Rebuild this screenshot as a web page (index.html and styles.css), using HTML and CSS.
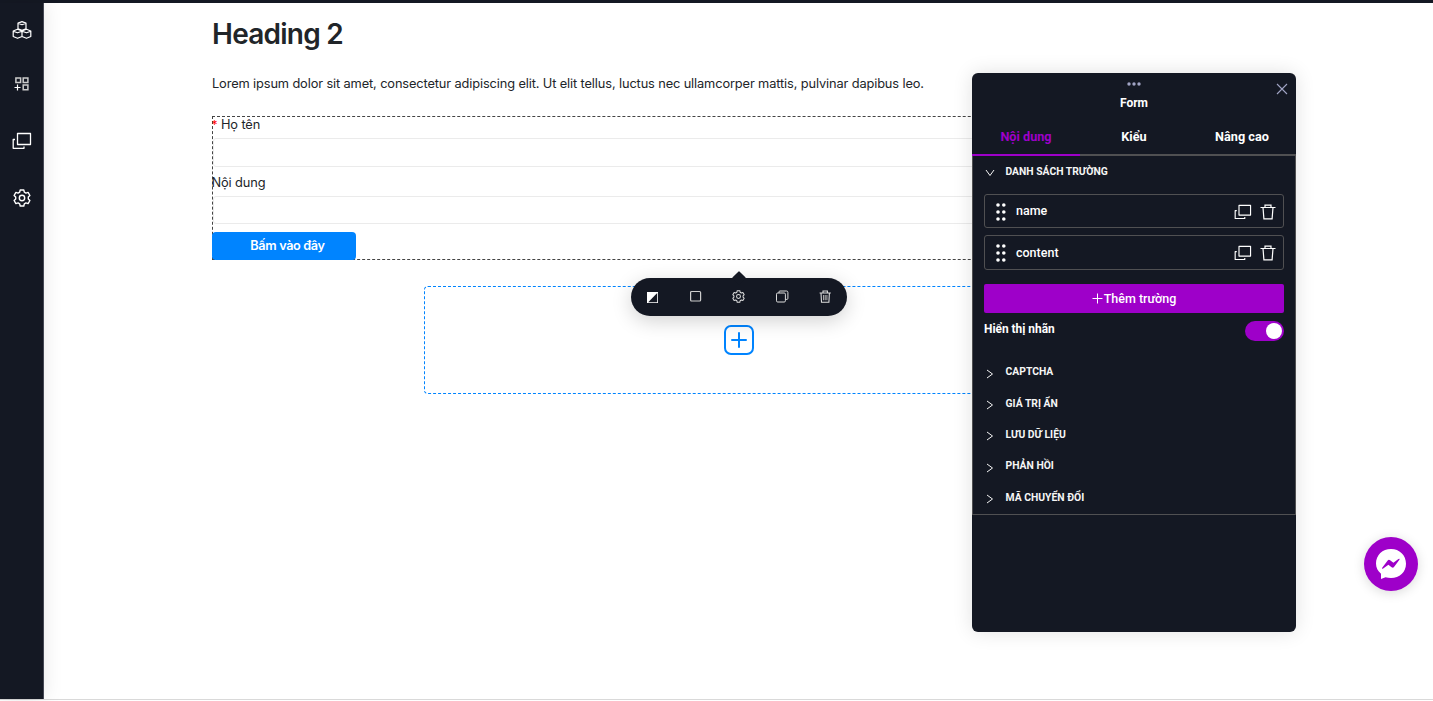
FILE: index.html
```html
<!DOCTYPE html>
<html lang="vi">
<head>
<meta charset="utf-8">
<title>Form editor</title>
<link rel="stylesheet" href="styles.css">
</head>
<body>
<svg class="defs" width="0" height="0">
  <symbol id="windows" viewBox="0 0 20 18"><path d="M5.500 1.500h13v11h-13zM3 7.500H1.200v8.800h10.800v-1.800" fill="none" stroke="currentColor" stroke-width="1.300" stroke-linejoin="round"/></symbol>
  <symbol id="gear" viewBox="0 0 18 18"><path d="M7.200 1h3.600l.5 2.200 1.600.9 2.200-.7 1.800 3.100-1.600 1.600v1.800l1.600 1.600-1.800 3.100-2.200-.7-1.600.9-.5 2.200H7.200l-.5-2.200-1.600-.9-2.200.7-1.800-3.100 1.600-1.600V8.100L1.100 6.500l1.800-3.100 2.200.7 1.600-.9z" fill="none" stroke="currentColor" stroke-width="1.400" stroke-linejoin="round"/><circle cx="9" cy="9" r="2.700" fill="none" stroke="currentColor" stroke-width="1.400"/></symbol>
  <symbol id="bin" viewBox="0 0 16 16"><path d="M.5 3.500h15M5 3.300V1.200h6v2.100M3 3.500l.9 11.300h8.200L13 3.500" fill="none" stroke="currentColor" stroke-width="1.200"/></symbol>
  <symbol id="grip" viewBox="0 0 10 18"><g fill="currentColor"><circle cx="2" cy="2" r="1.800"/><circle cx="7.800" cy="2" r="1.800"/><circle cx="2" cy="9" r="1.800"/><circle cx="7.800" cy="9" r="1.800"/><circle cx="2" cy="16" r="1.800"/><circle cx="7.800" cy="16" r="1.800"/></g></symbol>
  <symbol id="chevron" viewBox="0 0 8 10"><path d="M1 1l5.500 4L1 9" fill="none" stroke="currentColor"/></symbol>
</svg>
<div class="app">
  <div class="topbar"></div>
  <div class="workspace">
    <nav class="rail">
      <svg class="rail-icon" width="20" height="20" viewBox="0 0 20 20" fill="none" stroke="currentColor" stroke-width="1.200" stroke-linejoin="round"><path d="M10 1.600l4 1.500v5.800l-4 1.300-4-1.300V3.100zM6 3.300l4 1.400 4-1.400M5.500 9.300L10 11v5.500l-4.500 1.800-4.300-1.800V11zM1.200 11.200l4.300 1.600 4.500-1.600M14.500 9.300l4.300 1.700v5.500l-4.300 1.800-4.500-1.800V11zM10 11.200l4.500 1.600 4.300-1.600"/></svg>
      <svg class="rail-icon" width="16" height="16" viewBox="0 0 16 16" fill="none" stroke="#ccc" stroke-width="1.500"><path d="M1.900 1.900h4.700v4.700H1.900zM9.200 1.900h4.700v4.700H9.200zM9.200 9.100h4.700v4.700H9.200z"/><path d="M3.500 8.500v6M.5 11.500h6" stroke="#fff" stroke-width="1.200"/></svg>
      <svg class="rail-icon" width="20" height="18"><use href="#windows"/></svg>
      <svg class="rail-icon" width="18" height="18"><use href="#gear"/></svg>
    </nav>
    <main class="canvas">
      <section class="page">
        <h2 class="heading">Heading 2</h2>
        <p class="lorem">Lorem ipsum dolor sit amet, consectetur adipiscing elit. Ut elit tellus, luctus nec ullamcorper mattis, pulvinar dapibus leo.</p>
        <form class="form">
          <label class="label"><span class="required">*</span> Họ tên</label>
          <div class="input"></div>
          <label class="label label-second">Nội dung</label>
          <div class="input input-second"></div>
          <button class="submit" type="button">Bấm vào đây</button>
        </form>
        <div class="dropzone">
          <svg width="30" height="30" viewBox="0 0 30 30" fill="none" stroke="#0084ff" stroke-width="2"><rect x="1" y="1" width="28" height="28" rx="6"/><path d="M15 8v14M8 15h14" stroke-linecap="round"/></svg>
          <div class="toolbar">
            <svg width="13" height="13" viewBox="0 0 13 13"><rect x="1" y="2" width="11" height="11" fill="#fff"/><path d="M11.200 3v9.200H2.200z" fill="#141823"/></svg>
            <svg width="13" height="13" viewBox="0 0 13 13" fill="none" stroke="#ccc" stroke-width="1.200"><rect x="1.600" y="1.500" width="10" height="9.500" rx="1"/></svg>
            <svg width="13" height="13"><use href="#gear"/></svg>
            <svg width="13" height="13" viewBox="0 0 13 13" fill="none" stroke="#ddd"><rect x=".5" y="3" width="8.900" height="9" rx="1.200"/><path d="M3 3V1.800Q3 1 4 1h6.500q1.400 0 1.400 1.400v6q0 1-1 1H9.500"/></svg>
            <svg width="13" height="13" viewBox="0 0 13 13" fill="none" stroke="#ddd" stroke-width="1.100"><path d="M.6 3h11.200M4 3V1h4.400v2M2 3l.5 9.200h7.400L10.400 3"/><path d="M4.500 5v5.200M6.200 5v5.200M7.900 5v5.200" stroke="#aaa"/></svg>
          </div>
        </div>
      </section>
    </main>
  </div>
  <div class="bottomline"></div>
</div>
<aside class="panel">
  <header class="panel-head">
    <svg width="14" height="4" viewBox="0 0 14 4" fill="#a1a4c4"><circle cx="2" cy="2" r="1.700"/><circle cx="7" cy="2" r="1.700"/><circle cx="12" cy="2" r="1.700"/></svg>
    <div class="panel-title">Form</div>
    <svg class="close" width="12" height="12" viewBox="0 0 12 12" stroke="#a1a4c4" stroke-width="1.100"><path d="M1 1l10 10M11 1L1 11"/></svg>
  </header>
  <div class="tabs"><div class="tab active">Nội dung</div><div class="tab">Kiểu</div><div class="tab">Nâng cao</div></div>
  <div class="panel-body">
    <div class="group first"><svg class="chev down" width="8" height="10"><use href="#chevron"/></svg><span>DANH SÁCH TRƯỜNG</span></div>
    <div class="fields">
      <div class="field"><svg width="10" height="18"><use href="#grip"/></svg><span class="field-name">name</span><svg class="copy" width="18" height="16"><use href="#windows"/></svg><svg class="bin" width="16" height="16"><use href="#bin"/></svg></div>
      <div class="field"><svg width="10" height="18"><use href="#grip"/></svg><span class="field-name">content</span><svg class="copy" width="18" height="16"><use href="#windows"/></svg><svg class="bin" width="16" height="16"><use href="#bin"/></svg></div>
    </div>
    <button class="add" type="button"><svg width="11" height="11" viewBox="0 0 11 11" stroke="#fff"><path d="M5.500.5v10M.5 5.500h10"/></svg>Thêm trường</button>
    <div class="toggle-row"><span>Hiển thị nhãn</span><span class="toggle"><span class="knob"></span></span></div>
    <div class="groups">
      <div class="group"><svg class="chev" width="8" height="10"><use href="#chevron"/></svg><span>CAPTCHA</span></div>
      <div class="group"><svg class="chev" width="8" height="10"><use href="#chevron"/></svg><span>GIÁ TRỊ ẨN</span></div>
      <div class="group"><svg class="chev" width="8" height="10"><use href="#chevron"/></svg><span>LƯU DỮ LIỆU</span></div>
      <div class="group"><svg class="chev" width="8" height="10"><use href="#chevron"/></svg><span>PHẢN HỒI</span></div>
      <div class="group"><svg class="chev" width="8" height="10"><use href="#chevron"/></svg><span>MÃ CHUYỂN ĐỔI</span></div>
    </div>
  </div>
</aside>
<div class="chat">
  <svg width="32" height="32" viewBox="0 0 32 32"><path d="M16 1C7.500 1 1 7 1 15.500c0 4.300 1.800 7.600 5 10.200v5.200l4.500-1.600c1.700.5 3.600.8 5.500.8 8.500 0 15-6 15-14.400S24.500 1 16 1z" fill="#fff"/><path d="M7.200 19.800l5.500-7.300q1-1.300 2.400-.3l3.300 2.600 5-3.800q1.800-.9 1 .7l-5.400 7.200q-1 1.300-2.400.3l-3.200-2.500-5.200 3.900q-1.700.8-1-.8z" fill="#9e00c9"/></svg>
</div>
</body>
</html>
```
FILE: styles.css
```css
* { box-sizing: border-box; }
body { margin: 0; height: 701px; overflow: hidden; background: #fff; position: relative; font-family: Inter, sans-serif; color: #212529; }
svg { display: block; flex: none; }
.defs { position: absolute; }
.topbar { height: 3px; background: #141823; }
.workspace { display: flex; height: 696px; }
.bottomline { height: 1px; background: #d9d9d9; }
.rail { width: 44px; flex: none; background: #141823; border-right: 1px solid #454854; color: #fff; display: flex; flex-direction: column; align-items: center; padding-top: 17px; box-shadow: 0 0 20px rgba(0,0,0,.1); }
.rail-icon:nth-child(2) { margin-top: 36px; }
.rail-icon:nth-child(3) { margin-top: 39.500px; }
.rail-icon:nth-child(4) { margin-top: 39px; }
.canvas { flex: 1; display: flex; justify-content: center; }
.page { width: 1054px; padding-left: .5px; }
.heading { margin: 13px 0 0; height: 36px; line-height: 36px; font-size: 28px; font-weight: 580; letter-spacing: -.75px; }
.lorem { margin: 20px 0 0; height: 44px; line-height: 24px; font-size: 12.800px; letter-spacing: -.12px; white-space: nowrap; }
.form { height: 144px; margin-left: -.5px; border: 1px dashed #444; }
.label { display: block; margin-left: -1px; height: 21px; line-height: 15px; font-size: 12.800px; letter-spacing: -.1px; }
.required { color: #f00; font-size: 12px; }
.input { height: 29px; border: 1px solid #ebebeb; border-radius: 3px; }
.label-second { height: 20px; margin-top: 9px; line-height: 14px; }
.input-second { height: 28px; }
.submit { display: block; width: 144px; height: 28px; margin: 8px 0 0 -1px; padding: 0 0 0 8px; border: 0; border-radius: 4px; background: #0084ff; color: #fff; font: 600 12.700px/26px Inter, sans-serif; letter-spacing: -.35px; }
.dropzone { position: relative; width: 630px; height: 108px; margin: 26px auto 0; border: 1px dashed #0084ff; border-radius: 4px; display: flex; align-items: center; justify-content: center; }
.toolbar { position: absolute; left: 206px; top: -9px; width: 216px; height: 38px; border-radius: 19px; background: #141823; display: flex; align-items: center; justify-content: space-between; padding: 0 15px 1px; color: #ddd; box-shadow: 0 5px 20px rgba(0,0,0,.18); }
.toolbar::before { content: ""; position: absolute; left: 103px; top: -5px; width: 10px; height: 10px; background: #141823; transform: rotate(45deg); border-radius: 1px; }
.panel { position: absolute; left: 972px; top: 73px; width: 324px; height: 559px; background: #141823; border-radius: 6px; color: #fff; font: 500 12.500px/16px Roboto, sans-serif; box-shadow: 0 0 20px rgba(0,0,0,.12); }
.panel-head { height: 45px; position: relative; display: flex; flex-direction: column; align-items: center; padding-top: 9px; }
.panel-title { margin-top: 9px; font-weight: 700; font-size: 12px; }
.close { position: absolute; right: 8px; top: 10px; }
.tabs { display: flex; height: 38px; line-height: 38px; border-bottom: 2px solid #505052; font-size: 12.700px; font-weight: 700; }
.tab { flex: 1; height: 38px; text-align: center; }
.tab.active { color: #9e00c9; border-bottom: 2px solid #9e00c9; }
.panel-body { height: 360px; margin-top: -1px; border: 1px solid #505052; padding: 0 11px; }
.group { height: 31.400px; display: flex; align-items: center; gap: 12px; padding-left: 1.500px; font-size: 10.350px; font-weight: 700; color: #f5f5f5; }
.chev { position: relative; top: 1.500px; }
.groups { padding-top: .500px; }
.group.first { height: 32px; }
.down { transform: rotate(90deg); top: 1px; }
.fields { display: flex; flex-direction: column; gap: 7px; margin-top: 6px; }
.field { height: 34px; border: 1px solid #505052; border-radius: 3px; display: flex; align-items: center; padding: 1px 7px 0 10.500px; }
.field + .field { height: 35px; }
.field-name { flex: 1; margin: -2px 0 0 10.500px; }
.field + .field .field-name { margin-top: -1px; }
.copy { margin-right: 8px; }
.add { width: 100%; height: 29px; margin-top: 14px; border: 0; border-radius: 2px; background: #9e00c9; color: #fff; display: flex; align-items: center; justify-content: center; gap: 1px; font: 500 12.500px Roboto, sans-serif; }
.toggle-row { display: flex; justify-content: space-between; align-items: flex-start; padding-top: 8px; height: 43px; font-size: 11.900px; font-weight: 700; }
.toggle { width: 39px; height: 20px; border-radius: 10px; background: #9e00c9; display: flex; justify-content: flex-end; padding: 2px; }
.knob { width: 16px; height: 16px; border-radius: 50%; background: #fff; }
.chat { position: absolute; left: 1364px; top: 537px; width: 54px; height: 54px; border-radius: 50%; background: #9e00c9; display: flex; align-items: center; justify-content: center; box-shadow: 0 2px 12px rgba(0,0,0,.15); }
```
